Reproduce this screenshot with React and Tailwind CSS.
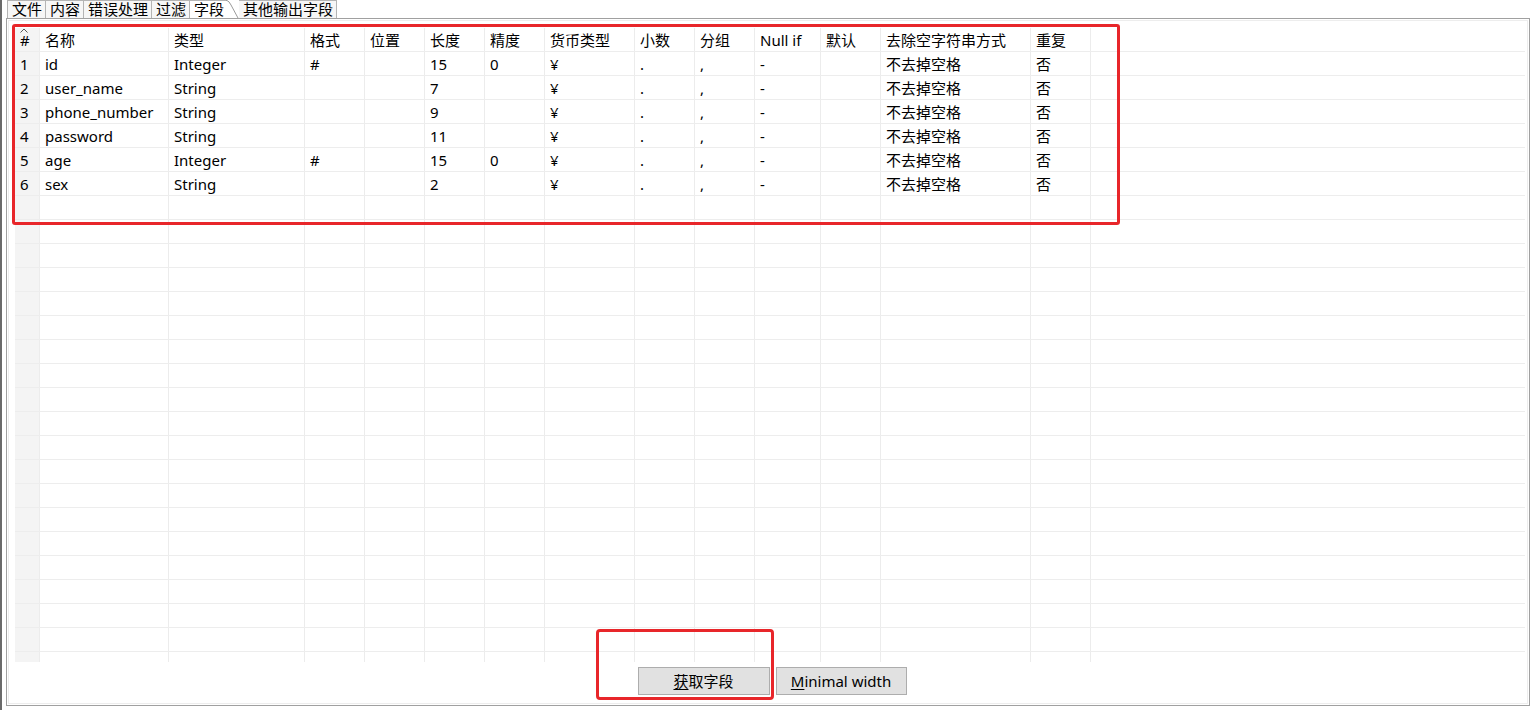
import React from 'react';

const cols = [
  { label: '#', w: 25 },
  { label: '名称', w: 129 },
  { label: '类型', w: 136 },
  { label: '格式', w: 60 },
  { label: '位置', w: 60 },
  { label: '长度', w: 60 },
  { label: '精度', w: 60 },
  { label: '货币类型', w: 90 },
  { label: '小数', w: 60 },
  { label: '分组', w: 60 },
  { label: 'Null if', w: 66 },
  { label: '默认', w: 60 },
  { label: '去除空字符串方式', w: 150 },
  { label: '重复', w: 60 },
];

const rows = [
  ['1', 'id', 'Integer', '#', '', '15', '0', '¥', '.', ',', '-', '', '不去掉空格', '否'],
  ['2', 'user_name', 'String', '', '', '7', '', '¥', '.', ',', '-', '', '不去掉空格', '否'],
  ['3', 'phone_number', 'String', '', '', '9', '', '¥', '.', ',', '-', '', '不去掉空格', '否'],
  ['4', 'password', 'String', '', '', '11', '', '¥', '.', ',', '-', '', '不去掉空格', '否'],
  ['5', 'age', 'Integer', '#', '', '15', '0', '¥', '.', ',', '-', '', '不去掉空格', '否'],
  ['6', 'sex', 'String', '', '', '2', '', '¥', '.', ',', '-', '', '不去掉空格', '否'],
];

const tabs = ['文件', '内容', '错误处理', '过滤'];

// pad the grid with blank rows down to the buttons
const allRows = [...rows];
while (allRows.length < 26) allRows.push(Array(14).fill(''));

const Cell = ({ w, first, children }) => (
  <div
    className={`relative shrink-0 h-full border-r border-[#ececec] whitespace-nowrap overflow-hidden leading-[24px] pl-[5px] ${first ? 'bg-[#f4f4f4]' : ''}`}
    style={{ width: w }}
  >
    {children}
  </div>
);

export default function App() {
  return (
    <div
      className="relative w-[1531px] h-[710px] overflow-hidden bg-white border-l-2 border-[#6a6a6a] text-black flex flex-col"
      style={{ fontFamily: '"Noto Sans", "Noto Sans CJK SC", sans-serif' }}
    >
      {/* tab strip */}
      <div className="h-[18px] flex items-stretch pl-[5px] text-[15px] leading-[17px] shrink-0">
        {tabs.map((t) => (
          <div key={t} className="pl-[4px] pr-[3px] border-l border-t border-[#b4b4b4] bg-[#f6f6f6]">{t}</div>
        ))}
        <div className="pl-[4px] pr-[3px] border-l border-t border-[#b4b4b4] bg-white">字段</div>
        <svg width="13" height="18" className="shrink-0 -ml-px">
          <path d="M0 0.5 L1 0.5 Q3 1 5 5 L12 18" stroke="#9a9a9a" fill="none" />
        </svg>
        <div className="pl-[4px] pr-[3px] border-r border-t border-[#b4b4b4] bg-[#f6f6f6]">其他输出字段</div>
      </div>

      {/* panel */}
      <div className="flex-1 ml-[4px] mr-[1px] mb-[4px] border border-[#a0a0a0] flex flex-col min-h-0">
        <div className="flex-1 m-[1px] border border-[#ededed] pl-[6px] pr-[2px] pt-[5px] flex flex-col min-h-0">
          <div className="h-[636px] overflow-hidden text-[15px] shrink-0">
            {/* header */}
            <div className="flex h-[26px] border-b border-[#ededed] pt-[2px]">
              {cols.map((c, i) => (
                <Cell key={i} w={c.w} first={i === 0}>
                  {i === 0 && (
                    <svg width="8" height="5" className="absolute top-0 left-[5px]">
                      <path d="M0.5 4.5 L4 1 L7.5 4.5" stroke="#555" fill="none" />
                    </svg>
                  )}
                  {c.label}
                </Cell>
              ))}
            </div>
            {allRows.map((r, ri) => (
              <div key={ri} className="flex h-[24px] border-b border-[#ededed]">
                {r.map((v, ci) => (
                  <Cell key={ci} w={cols[ci].w} first={ci === 0}>{v}</Cell>
                ))}
              </div>
            ))}
          </div>
          {/* buttons */}
          <div className="flex justify-center gap-[6px] pt-[5px] pl-[4px] text-[15px]">
            <button className="w-[132px] h-[28px] bg-[#e1e1e1] border border-[#adadad] leading-[26px]">
              <span className="underline underline-offset-2">获</span>取字段
            </button>
            <button className="w-[131px] h-[28px] bg-[#e1e1e1] border border-[#adadad] leading-[26px]">
              <span className="underline underline-offset-2">M</span>inimal width
            </button>
          </div>
        </div>
      </div>

      {/* red annotation boxes */}
      <div className="absolute left-[10px] top-[24px] w-[1108px] h-[201px] border-[3px] border-[#e8262a] rounded-[3px]" />
      <div className="absolute left-[594px] top-[629px] w-[178px] h-[71px] border-[3px] border-[#e8262a] rounded-[4px]" />
    </div>
  );
}
